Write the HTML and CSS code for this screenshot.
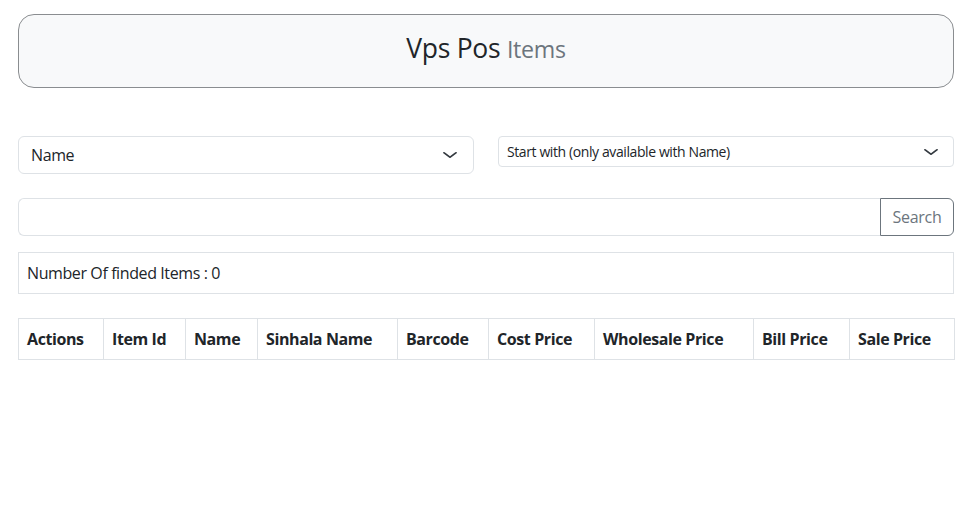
FILE: index.html
```html
<!DOCTYPE html>
<html lang="en">
<head>
<meta charset="utf-8">
<title>Vps Pos Items</title>
<link rel="stylesheet" href="styles.css">
</head>
<body>
<div class="page">
  <header class="banner">
    <h3 class="banner-title">Vps Pos <small class="muted">Items</small></h3>
  </header>

  <div class="filters">
    <div class="select select-lg">
      <span>Name</span>
      <svg class="chev" viewBox="0 0 16 16" width="16" height="12" preserveAspectRatio="none"><path d="m2 5 6 6 6-6" fill="none" stroke="#343a40" stroke-width="2" stroke-linecap="round" stroke-linejoin="round"/></svg>
    </div>
    <div class="select select-sm">
      <span>Start with (only available with Name)</span>
      <svg class="chev" viewBox="0 0 16 16" width="16" height="12" preserveAspectRatio="none"><path d="m2 5 6 6 6-6" fill="none" stroke="#343a40" stroke-width="2" stroke-linecap="round" stroke-linejoin="round"/></svg>
    </div>
  </div>

  <div class="search-group">
    <div class="search-input"></div>
    <button class="search-btn" type="button">Search</button>
  </div>

  <div class="count-box">Number Of finded Items : 0</div>

  <table class="items">
    <thead>
      <tr>
        <th class="c1">Actions</th>
        <th class="c2">Item Id</th>
        <th class="c3">Name</th>
        <th class="c4">Sinhala Name</th>
        <th class="c5">Barcode</th>
        <th class="c6">Cost Price</th>
        <th class="c7">Wholesale Price</th>
        <th class="c8">Bill Price</th>
        <th class="c9">Sale Price</th>
      </tr>
    </thead>
  </table>
</div>
</body>
</html>
```

FILE: styles.css
```css
* { box-sizing: border-box; }

body {
  margin: 0;
  background: #fff;
  color: #212529;
  font-family: "Segoe UI", "Open Sans", "Noto Sans", sans-serif;
  font-size: 16px;
  line-height: 1.5;
  letter-spacing: -0.4px;
}

.page {
  width: 936px;
  margin-left: 18px;
  padding-top: 14px;
}

.banner {
  height: 74px;
  background: #f8f9fa;
  border: 1px solid #8a8d90;
  border-radius: 16px;
  padding-top: 17px;
  text-align: center;
}

.banner-title {
  margin: 0;
  font-size: 26.5px;
  font-weight: 500;
  line-height: 32px;
  letter-spacing: -0.3px;
}

.muted {
  font-size: 0.875em;
  color: #6c757d;
}

.filters {
  display: flex;
  gap: 24px;
  align-items: flex-start;
  margin-top: 48px;
}

.select {
  width: 456px;
  display: flex;
  align-items: center;
  justify-content: space-between;
  background: #fff;
  border: 1px solid #dee2e6;
}

.select-lg {
  height: 38px;
  padding: 0 15px 0 12px;
  border-radius: 6px;
  font-size: 16px;
}

.select-sm {
  height: 31px;
  padding: 0 14px 0 8px;
  border-radius: 4px;
  font-size: 14px;
}

.chev { display: block; }

.search-group {
  display: flex;
  height: 38px;
  margin-top: 24px;
}

.search-input {
  flex: 1;
  border: 1px solid #dee2e6;
  border-right: none;
  border-radius: 6px 0 0 6px;
}

.search-btn {
  width: 74px;
  background: #fff;
  border: 1px solid #6c757d;
  border-radius: 0 6px 6px 0;
  color: #6c757d;
  font-family: inherit;
  font-size: 16px;
  letter-spacing: -0.3px;
  padding: 0;
}

.count-box {
  margin-top: 16px;
  border: 1px solid #dee2e6;
  padding: 8px;
  line-height: 24px;
}

.items {
  width: 936px;
  margin-top: 24px;
  border-collapse: collapse;
  table-layout: fixed;
}

.items th {
  border: 1px solid #dee2e6;
  padding: 8px;
  text-align: left;
  font-weight: 700;
  line-height: 24px;
  white-space: nowrap;
}

.c1 { width: 85px; }
.c2 { width: 82px; }
.c3 { width: 72px; }
.c4 { width: 140px; }
.c5 { width: 91px; }
.c6 { width: 106px; }
.c7 { width: 159px; }
.c8 { width: 96px; }
.c9 { width: 105px; }
```
